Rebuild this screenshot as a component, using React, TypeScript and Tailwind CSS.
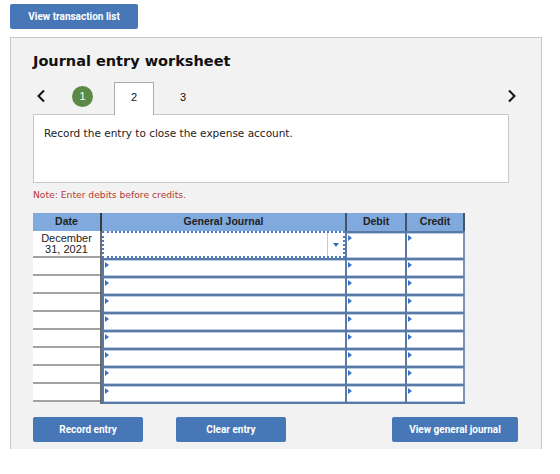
import React from "react";

const BLUE_DARK = "border-[#5a79a5]";

function Marker() {
  return (
    <span className="absolute left-[1px] top-[2px] w-0 h-0 border-y-[3px] border-y-transparent border-l-[4px] border-l-[#3a74c6]" />
  );
}

function InputCell({ w, last, marker = true }: { w: string; last?: boolean; marker?: boolean }) {
  return (
    <div
      className={`relative ${w} h-full bg-white border-t-2 ${BLUE_DARK} border-l-2 ${last ? "border-r-2 border-r-[#7b93b5]" : ""} shadow-[inset_0_1px_0_#b9cce6,inset_0_-1px_0_#b9cce6]`}
    >
      {marker && <Marker />}
    </div>
  );
}

function Row({ first }: { first?: boolean }) {
  return (
    <div className={`flex ${first ? "h-[27px]" : "h-[18px]"}`}>
      <div
        className={`w-[67px] h-full bg-white border-b-2 border-[#a3a3a3] flex flex-col items-center justify-center text-[11px] leading-[11px] text-[#222] [font-family:'Liberation_Sans',Arial,sans-serif]`}
      >
        {first ? (
          <>
            <span>December</span>
            <span>31, 2021</span>
          </>
        ) : null}
      </div>
      <div className="w-[2px] h-full bg-[#6b6b6b]" />
      {first ? (
        <div className="relative w-[243px] h-full bg-white border-2 border-dotted border-[#4a7ac4] flex">
          <div className="flex-1" />
          <div className="w-[16px] h-full border-l border-[#c9c9c9] flex items-center justify-center">
            <span className="w-0 h-0 border-x-[3.5px] border-x-transparent border-t-[4px] border-t-[#3a6fb8]" />
          </div>
        </div>
      ) : (
        <InputCell w="w-[243px]" />
      )}
      <InputCell w="w-[60px]" />
      <InputCell w="w-[60px]" last />
    </div>
  );
}

function Btn({ children, w }: { children: React.ReactNode; w: string }) {
  return (
    <div
      className={`${w} h-[25px] rounded-[2px] bg-[#4777b6] text-white text-[10px] font-bold flex items-center justify-center [font-family:Roboto,'Liberation_Sans',sans-serif]`}
    >
      {children}
    </div>
  );
}

export default function App() {
  return (
    <div className="w-[560px] h-[474px] bg-white relative overflow-hidden">
      <div className="pt-[4px] pl-[10px]">
        <Btn w="w-[128px]">View transaction list</Btn>
      </div>
      <div className="ml-[10px] mt-[8px] w-[532px] h-[412px] border border-b-0 border-[#c8c8c8] bg-[#f2f2f2]">
        <div className="pl-[22px] pt-[14px]">
          <div className="h-[18px] text-[14.5px] leading-[18px] font-bold text-[#111] [font-family:'DejaVu_Sans',Verdana,sans-serif]">
            Journal entry worksheet
          </div>
          <div className="mt-[12px] h-[32px] flex items-center relative">
            <svg width="10" height="14" viewBox="0 0 10 14" className="absolute left-[3px] top-[7px]">
              <polyline points="8,1.5 2.5,7 8,12.5" fill="none" stroke="#111" strokeWidth="2" />
            </svg>
            <div className="absolute left-[39px] top-[4px] w-[21px] h-[21px] rounded-full bg-[#5b8a47] text-white text-[11px] flex items-center justify-center [font-family:'Liberation_Sans',Arial,sans-serif]">
              1
            </div>
            <div className="absolute left-[81px] top-0 w-[40px] h-[33px] bg-white border border-b-0 border-[#acacac] z-10 flex items-center justify-center pb-[3px] text-[11px] text-[#111] [font-family:'Liberation_Sans',Arial,sans-serif]">
              2
            </div>
            <div className="absolute left-[147px] top-[7px] text-[11px] text-[#111] [font-family:'Liberation_Sans',Arial,sans-serif]">
              3
            </div>
            <svg width="10" height="14" viewBox="0 0 10 14" className="absolute left-[474px] top-[7px]">
              <polyline points="2,1.5 7.5,7 2,12.5" fill="none" stroke="#111" strokeWidth="2" />
            </svg>
          </div>
          <div className="w-[476px] h-[69px] bg-white border border-[#c8c8c8] px-[10px] pt-[11px] text-[10.5px] leading-[14px] text-[#222] [font-family:'DejaVu_Sans',Verdana,sans-serif]">
            Record the entry to close the expense account.
          </div>
          <div className="mt-[6px] h-[12px] text-[9.2px] leading-[12px] text-[#b63a32] [font-family:'DejaVu_Sans',Verdana,sans-serif]">
            Note: Enter debits before credits.
          </div>
          <div className="mt-[12px] w-[432px]">
            <div className="flex h-[18px] bg-[#80a9de] text-[10.5px] font-bold text-[#222] [font-family:'Liberation_Sans',Arial,sans-serif]">
              <div className="w-[67px] flex items-center justify-center">Date</div>
              <div className="w-[2px] bg-[#3a3a3a]" />
              <div className="w-[243px] flex items-center justify-center">General Journal</div>
              <div className="w-[60px] border-l-2 border-[#44526a] flex items-center justify-center">Debit</div>
              <div className="w-[60px] border-l-2 border-r-2 border-[#44526a] flex items-center justify-center">Credit</div>
            </div>
            <Row first />
            {Array.from({ length: 8 }).map((_, i) => (
              <Row key={i} />
            ))}
            <div className="flex h-[2px]">
              <div className="w-[67px]" />
              <div className="w-[2px] bg-[#6b6b6b]" />
              <div className="w-[363px] bg-[#5a79a5]" />
            </div>
          </div>
          <div className="mt-[13px] w-[485px] flex">
            <Btn w="w-[110px]">Record entry</Btn>
            <div className="ml-[33px]">
              <Btn w="w-[110px]">Clear entry</Btn>
            </div>
            <div className="ml-auto">
              <Btn w="w-[126px]">View general journal</Btn>
            </div>
          </div>
        </div>
      </div>
    </div>
  );
}
